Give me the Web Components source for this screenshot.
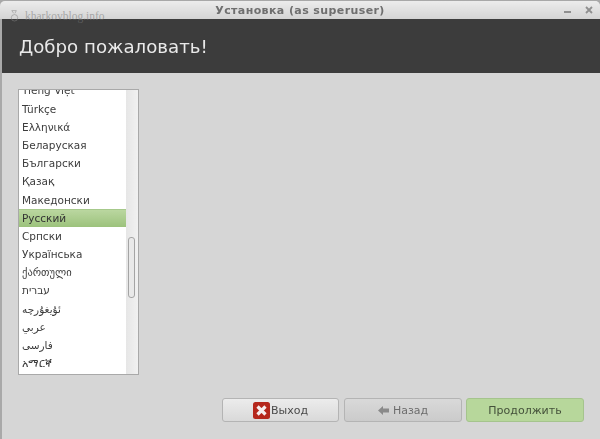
<!DOCTYPE html>
<html>
<head>
<meta charset="utf-8">
<title>Установка</title>
<style>
  html, body { margin: 0; padding: 0; height: 100%; background: #8f8f8f; }
  body { font-family: "DejaVu Sans", "Noto Sans", sans-serif; overflow: hidden; }
</style>
</head>
<body>
<installer-window>
  <lang-list selected="Русский"></lang-list>
  <action-button slot="actions" kind="quit">Выход</action-button>
  <action-button slot="actions" kind="back" disabled>Назад</action-button>
  <action-button slot="actions" kind="next">Продолжить</action-button>
</installer-window>

<script>
class InstallerWindow extends HTMLElement {
  constructor() {
    super();
    this.attachShadow({ mode: 'open' });
    this.shadowRoot.innerHTML = `
      <style>
        :host {
          display: flex;
          flex-direction: column;
          position: relative;
          width: 600px;
          height: 439px;
          box-sizing: border-box;
          padding: 1px 0 0 0;
          background: #a8a8a8;
        }
        .frame {
          flex: 1;
          display: flex;
          flex-direction: column;
          border-radius: 5px 5px 0 0;
          overflow: hidden;
          background: #d6d6d6;
          box-shadow: inset 2px 0 0 #a9a9a9;
          filter: blur(0.35px);
        }
        .titlebar {
          height: 18px;
          flex: none;
          display: flex;
          align-items: center;
          justify-content: center;
          position: relative;
          background: linear-gradient(#ececec, #d4d4d4);
          color: #6f6f6f;
          font: bold 11px "DejaVu Sans", sans-serif;
          letter-spacing: 0.4px;
        }
        .controls {
          position: absolute;
          right: 6px;
          top: 3px;
          display: flex;
          gap: 11px;
        }
        .header {
          height: 54px;
          flex: none;
          margin-left: 2px;
          display: flex;
          align-items: center;
          padding-left: 17px;
          background: #3c3c3c;
          color: #e9e9e9;
          font-size: 18.2px;
        }
        .body {
          flex: 1;
          display: flex;
          flex-direction: column;
          padding: 16px 16px 17px 18px;
          min-height: 0;
        }
        .actions {
          margin-top: auto;
          display: flex;
          justify-content: flex-end;
          gap: 5px;
        }
        .mark {
          position: absolute;
          left: 10px;
          top: 9px;
          display: flex;
          align-items: center;
          gap: 6px;
          color: rgba(120, 120, 120, 0.55);
          font: 11.5px "Liberation Serif", serif;
        }
      </style>
      <div class="frame">
        <div class="titlebar">
          Установка (as superuser)
          <div class="controls">
            <svg width="10" height="12" viewBox="0 0 10 12"><rect x="1" y="7" width="7" height="2" fill="#8f8f8f"/></svg>
            <svg width="10" height="12" viewBox="0 0 10 12"><path d="M2 3l6 6M8 3l-6 6" stroke="#8f8f8f" stroke-width="1.8" fill="none"/></svg>
          </div>
        </div>
        <div class="header">Добро пожаловать!</div>
        <div class="body">
          <slot></slot>
          <div class="actions"><slot name="actions"></slot></div>
        </div>
      </div>
      <div class="mark">
        <svg width="9" height="14" viewBox="0 0 10 14" fill="none" stroke="rgba(130,130,130,.55)"><path d="M2 1h5l-1.5 3M2 1l2 3"/><circle cx="5" cy="9" r="3.6"/></svg>
        <span>kharkovblog.info</span>
      </div>
    `;
  }
}

const LANGS = [
  'Tiếng Việt', 'Türkçe', 'Ελληνικά', 'Беларуская', 'Български', 'Қазақ', 'Македонски',
  'Русский', 'Српски', 'Українська', 'ქართული', 'עברית', 'ئۇيغۇرچە', 'عربي', 'فارسی', 'አማርኛ'
];

class LangList extends HTMLElement {
  constructor() {
    super();
    this.attachShadow({ mode: 'open' });
    this.shadowRoot.innerHTML = `
      <style>
        :host {
          display: flex;
          flex: none;
          width: 121px;
          height: 286px;
          box-sizing: border-box;
          border: 1px solid #a9a9a9;
          background: #fff;
          font-size: 10.5px;
          color: #3c3c3c;
        }
        .items { flex: 1; overflow: hidden; }
        .inner { margin-top: -8.6px; }
        .item {
          height: 18.2px;
          line-height: 18px;
          padding-left: 3px;
          white-space: nowrap;
        }
        .item.sel {
          background: linear-gradient(#bcd8a2, #9cc27c);
          box-shadow: inset 0 1px 0 #a6c98b;
          color: #333;
        }
        .track {
          flex: none;
          width: 12px;
          padding: 147px 0 0 2px;
          box-sizing: border-box;
          background: linear-gradient(90deg, #e6e6e6, #f1f1f1);
        }
        .thumb {
          width: 7px;
          height: 61px;
          box-sizing: border-box;
          border: 1px solid #a4a4a4;
          border-radius: 3px;
          background: #e9e9e9;
        }
      </style>
      <div class="items"><div class="inner"></div></div>
      <div class="track"><div class="thumb"></div></div>
    `;
    const inner = this.shadowRoot.querySelector('.inner');
    const selected = this.getAttribute('selected');
    LANGS.forEach(name => {
      const row = document.createElement('div');
      row.className = 'item' + (name === selected ? ' sel' : '');
      row.textContent = name;
      row.dir = 'ltr';
      inner.appendChild(row);
    });
  }
}

const ICONS = {
  quit: `<svg width="17" height="17" viewBox="0 0 17 17"><rect width="17" height="17" rx="2.5" fill="#b5271c"/><path d="M4.5 4.5l8 8M12.5 4.5l-8 8" stroke="#f6eeee" stroke-width="3.2"/></svg>`,
  back: `<svg width="11" height="9" viewBox="0 0 11 9"><path d="M0 4.5L5 0v2.5h6v4H5V9z" fill="#8a8a8a"/></svg>`,
  next: ''
};

class ActionButton extends HTMLElement {
  constructor() {
    super();
    this.attachShadow({ mode: 'open' });
    const kind = this.getAttribute('kind');
    this.shadowRoot.innerHTML = `
      <style>
        :host {
          display: flex;
          width: 117px;
          height: 24px;
          box-sizing: border-box;
          align-items: center;
          justify-content: center;
          gap: 1px;
          border: 1px solid #b4b4b4;
          border-radius: 3px;
          font-size: 11px;
          color: #4a4a4a;
          background: linear-gradient(#ececec, #d9d9d9);
        }
        :host([disabled]) {
          width: 118px;
          margin-right: -1px;
          color: #6d6d6d;
          background: linear-gradient(#d9d9d9, #cbcbcb);
          gap: 4px;
        }
        :host([kind="next"]) {
          width: 118px;
          border-color: #a5c48d;
          background: #b7d79b;
          color: #44513a;
        }
      </style>
      ${ICONS[kind]}<slot></slot>
    `;
  }
}

customElements.define('installer-window', InstallerWindow);
customElements.define('lang-list', LangList);
customElements.define('action-button', ActionButton);
</script>
</body>
</html>
